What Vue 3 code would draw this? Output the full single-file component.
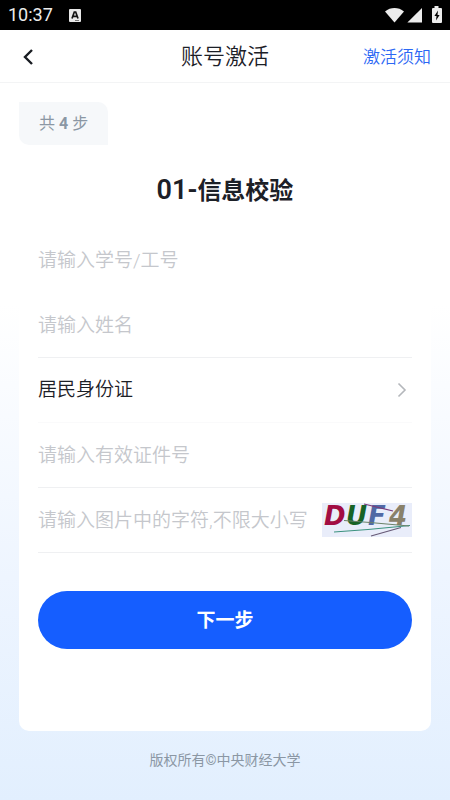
<script setup>
import { ref } from 'vue'

const form = ref({ account: '', name: '', idType: 'resident', idNumber: '', captcha: '' })
</script>

<template>
  <div class="page">
    <div class="status">
      <span class="clock">10:37</span>
      <svg class="notice" width="12" height="13" viewBox="0 0 12 13" aria-hidden="true">
        <rect width="12" height="13" rx="1" fill="#e8e8e8" />
        <path d="M3 9.500 5.300 3h1.400L9 9.500M4 7.400h4" fill="none" stroke="#111" stroke-width="1.700" />
        <path d="M6 11.500h4" stroke="#777" stroke-width="1" />
      </svg>
      <svg class="system" width="58" height="18" viewBox="0 0 58 18" aria-hidden="true">
        <path d="M1 5.400C6.500.9 14.500.9 20 5.400L10.500 16.600Z" fill="#ececec" />
        <path d="M38 2v14.600H23.400Z" fill="#ececec" />
        <path d="M50.500 0h4v2H57q1 0 1 1v13q0 1-1 1h-8q-1 0-1-1V3q0-1 1-1h1.500Z" fill="#ececec" />
        <path d="M54 4.500 50.400 10H52.500L52 14.500 55.600 9H53.500Z" fill="#000" />
      </svg>
    </div>

    <header class="bar">
      <button class="back" type="button" aria-label="返回">
        <svg width="12" height="16" viewBox="0 0 12 16"><path d="M9 1 2 8l7 7" fill="none" stroke="#191c22" stroke-width="2.400" /></svg>
      </button>
      <h1>账号激活</h1>
      <a class="guide" href="#guide">激活须知</a>
    </header>

    <main>
      <form class="card" @submit.prevent>
        <div class="steps">共 <b>4</b> 步</div>
        <h2><span class="index">01-</span>信息校验</h2>
        <div class="fields">
          <div class="row plain">
            <input v-model="form.account" type="text" placeholder="请输入学号/工号" aria-label="学号/工号" />
          </div>
          <div class="row">
            <input v-model="form.name" type="text" placeholder="请输入姓名" aria-label="姓名" />
          </div>
          <div class="row faint">
            <select v-model="form.idType" aria-label="证件类型">
              <option value="resident">居民身份证</option>
            </select>
            <svg class="arrow" width="10" height="16" viewBox="0 0 10 16" aria-hidden="true"><path d="m1.500 1.500 6.500 6.500-6.500 6.500" fill="none" stroke="#b4b7bb" stroke-width="1.600" /></svg>
          </div>
          <div class="row">
            <input v-model="form.idNumber" type="text" placeholder="请输入有效证件号" aria-label="证件号" />
          </div>
          <div class="row">
            <input v-model="form.captcha" type="text" placeholder="请输入图片中的字符,不限大小写" aria-label="图片验证码" />
            <svg class="captcha" width="90" height="34" viewBox="0 0 90 34" role="img" aria-label="验证码">
              <rect width="90" height="34" fill="#e9edfa" />
              <g class="letters">
                <text x="2" y="22" fill="#a20d43">D</text>
                <text x="24" y="22" fill="#176326">U</text>
                <text x="46" y="22" fill="#5069a5">F</text>
                <text x="67" y="22" fill="#89816a">4</text>
              </g>
              <g fill="none" stroke-width="1.200">
                <path d="M12 29 46 26.500 88 22.500" stroke="#3b927f" />
                <path d="M22 17.500 48 19.500 87 23" stroke="#6b8269" />
                <path d="M42 1 71 8" stroke="#793b78" />
                <path d="M49 33 79 24.500" stroke="#665976" />
              </g>
            </svg>
          </div>
        </div>
        <button class="next" type="submit">下一步</button>
      </form>
      <footer>版权所有©中央财经大学</footer>
    </main>
  </div>
</template>

<style>
body { margin: 0; }
</style>

<style scoped>
* { box-sizing: border-box; }
.page {
  min-height: 100vh;
  display: flex;
  flex-direction: column;
  background: linear-gradient(#fff 38%, #eef5ff 72%, #e2effe);
  color: #1c2027;
  font-family: Roboto, "Noto Sans CJK SC", sans-serif;
}
.status {
  height: 30px;
  padding: 0 8px;
  display: flex;
  align-items: center;
  background: #000;
  color: #ececec;
}
.clock { font-size: 18px; line-height: 30px; }
.notice { margin-left: 16px; }
.system { margin-left: auto; }
.bar {
  height: 53px;
  padding: 2px 19px 0;
  display: grid;
  grid-template-columns: 1fr auto 1fr;
  align-items: center;
  background: #fff;
  border-bottom: 1px solid #f3f4f5;
}
.back {
  justify-self: start;
  display: flex;
  padding: 4px;
  border: 0;
  background: none;
}
h1 { margin: 0; font-size: 22px; font-weight: 350; line-height: 32px; }
.guide { justify-self: end; font-size: 17px; font-weight: 350; line-height: 24px; color: #2c68f4; text-decoration: none; }
main {
  flex: 1;
  display: flex;
  flex-direction: column;
  padding: 19px 19px 30px;
}
.card {
  flex: 1;
  display: flex;
  flex-direction: column;
  background: #fff;
  border-radius: 10px;
}
.steps {
  align-self: flex-start;
  padding: 0 20px;
  border-radius: 0 10px 0 10px;
  background: #f6f8fa;
  color: #8b97a4;
  font-size: 16px;
  line-height: 43px;
}
h2 { margin: 28px 0 19px; text-align: center; font-size: 24px; font-weight: 700; line-height: 36px; }
.index { font-size: 27px; font-weight: 600; line-height: 27px; }
.fields { padding: 0 19px; }
.row {
  height: 65px;
  display: flex;
  align-items: center;
  border-bottom: 1px solid #eff0f2;
}
.plain { border-color: transparent; }
.faint { border-color: #fafafb; }
input, select {
  flex: 1;
  min-width: 0;
  height: 40px;
  padding: 0;
  border: 0;
  outline: 0;
  appearance: none;
  background: transparent;
  color: #1c2027;
  font: 350 19px/28px Roboto, "Noto Sans CJK SC", sans-serif;
}
input::placeholder { color: #c5c7cc; opacity: 1; }
.arrow { margin-right: 5px; }
.captcha { flex: none; overflow: visible; }
.letters { font: italic 700 26px "DejaVu Sans", sans-serif; }
.next {
  height: 58px;
  margin: 38px 19px 82px;
  padding: 2px 0 0;
  border: 0;
  border-radius: 29px;
  background: #155eff;
  color: #fff;
  font: 700 19px/28px Roboto, "Noto Sans CJK SC", sans-serif;
}
footer { padding-top: 18px; text-align: center; font-size: 14px; line-height: 22px; color: #8b97a4; }
</style>
